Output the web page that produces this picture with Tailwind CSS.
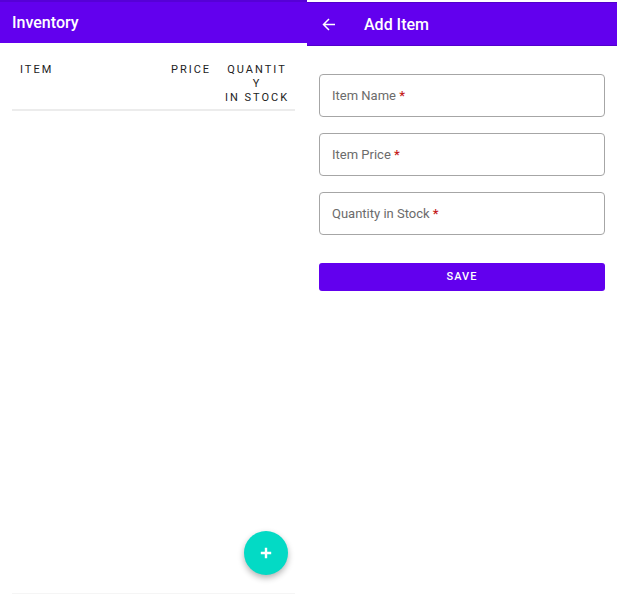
<!DOCTYPE html>
<html lang="en">
<head>
<meta charset="utf-8">
<meta name="viewport" content="width=device-width, initial-scale=1">
<title>Inventory</title>
<script src="https://cdn.jsdelivr.net/npm/@tailwindcss/browser@4"></script>
</head>
<body class="bg-white font-[Roboto,sans-serif]">
<div class="grid min-h-screen grid-cols-[307fr_310fr]">
  <section class="relative flex flex-col" aria-label="Inventory list">
    <header class="flex h-[43px] items-center border-t-2 border-[#5600d6] bg-[#6200ee] px-3">
      <h1 class="text-base font-medium text-white">Inventory</h1>
    </header>
    <main class="flex-1 px-3 pt-5">
      <table class="w-full table-fixed border-b-2 border-[#ececec] text-[11px] leading-[14px] tracking-[2px] text-[#222222]">
        <colgroup>
          <col>
          <col class="w-[64px]">
          <col class="w-[72px]">
        </colgroup>
        <thead>
          <tr class="align-top">
            <th scope="col" class="px-2 text-left font-normal">ITEM</th>
            <th scope="col" class="pb-1 text-center font-normal">PRICE</th>
            <th scope="col" class="pr-1 pb-1 text-center font-normal wrap-break-word">QUANTITY<br>IN STOCK</th>
          </tr>
        </thead>
      </table>
    </main>
    <button type="button" aria-label="Add item" class="absolute right-[19px] bottom-[19px] flex size-11 items-center justify-center rounded-full bg-[#03dac5] shadow-[0_3px_6px_rgba(0,0,0,0.3)]">
      <svg class="size-4" viewBox="0 0 16 16" fill="none" stroke="#fff" stroke-width="2.4" aria-hidden="true"><path d="M8 2.800v10.400M2.800 8h10.400"/></svg>
    </button>
    <footer class="mx-3 border-b border-[#f5f5f5]"></footer>
  </section>

  <section class="flex flex-col pt-[2px]" aria-label="Add item form">
    <header class="flex h-11 items-center gap-[27px] border-y border-[#5200cc] bg-[#6200ee] px-[14px] pt-[2px]">
      <button type="button" aria-label="Back" class="flex">
        <svg class="size-4" viewBox="0 0 16 16" fill="none" stroke="#fff" stroke-width="1.5" aria-hidden="true"><path d="M14 7.500H2.500M8 2L2.500 7.500L8 13"/></svg>
      </button>
      <h2 class="text-base font-medium text-white">Add Item</h2>
    </header>
    <form class="px-3 pt-7">
      <div class="grid gap-4">
        <div class="grid">
          <input id="item-name" type="text" required class="col-start-1 row-start-1 h-[43px] w-full rounded-sm border border-[#a6a6a6] px-3 text-[13px] shadow-none outline-none">
          <label for="item-name" class="col-start-1 row-start-1 self-center px-[13px] text-[13px] leading-4 text-[#6b6b6b]">Item Name <span class="font-medium text-[#c41c1c]">*</span></label>
        </div>
        <div class="grid">
          <input id="item-price" type="text" inputmode="decimal" required class="col-start-1 row-start-1 h-[43px] w-full rounded-sm border border-[#a6a6a6] px-3 text-[13px] shadow-none outline-none">
          <label for="item-price" class="col-start-1 row-start-1 self-center px-[13px] text-[13px] leading-4 text-[#6b6b6b]">Item Price <span class="font-medium text-[#c41c1c]">*</span></label>
        </div>
        <div class="grid">
          <input id="item-quantity" type="text" inputmode="numeric" required class="col-start-1 row-start-1 h-[43px] w-full rounded-sm border border-[#a6a6a6] px-3 text-[13px] shadow-none outline-none">
          <label for="item-quantity" class="col-start-1 row-start-1 self-center px-[13px] text-[13px] leading-4 text-[#6b6b6b]">Quantity in Stock <span class="font-medium text-[#c41c1c]">*</span></label>
        </div>
      </div>
      <button type="submit" class="mt-7 h-7 w-full rounded-[3px] bg-[#6200ee] text-[11px] font-medium tracking-[1px] text-white">SAVE</button>
    </form>
  </section>
</div>
</body>
</html>
